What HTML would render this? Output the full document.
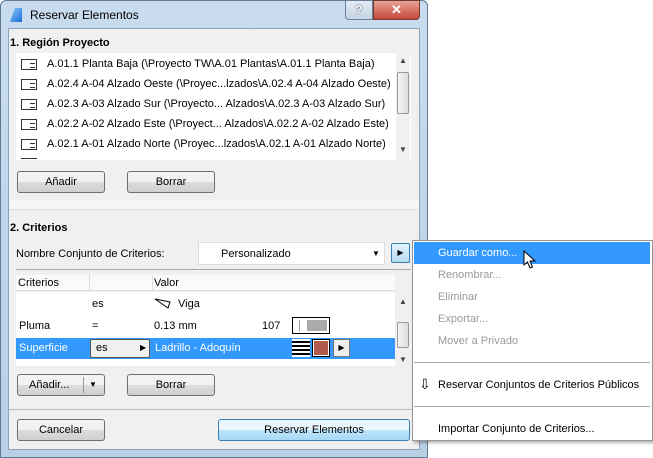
<!DOCTYPE html>
<html><head><meta charset="utf-8"><style>
*{box-sizing:border-box;margin:0;padding:0}
body{width:653px;height:458px;background:#fff;position:relative;overflow:hidden;font-family:"Liberation Sans",sans-serif;font-size:11px;color:#000}
.a{position:absolute}
.win{left:0;top:0;width:428px;height:458px;background:linear-gradient(#c9dcef,#b9cfe6);border:1px solid #5f7a99;border-radius:6px 6px 0 0}
.client{left:8px;top:28px;width:412px;height:422px;background:#f0f0f0;border:1px solid #8ea3bb}
.btn{position:absolute;height:22px;border:1px solid #707070;border-radius:3px;background:linear-gradient(#f2f2f2 50%,#dddddd 50%,#cfcfcf);text-align:center;line-height:20px}
.t{position:absolute;white-space:nowrap}
.row{position:absolute;left:47px;white-space:nowrap}
.ic{position:absolute;left:21px;width:16px;height:11px;border:1px solid #333;background:#fff}
.ic:after{content:"";position:absolute;right:1px;bottom:1px;width:5px;height:3px;border-top:1px solid #333;border-bottom:1px solid #333}
.sb{position:absolute;width:14px;background:#f0f0f0}
.m{position:absolute;left:438px;white-space:nowrap}
.g{color:#9a9a9a}
</style></head><body>
<div class="a win"></div>
<div class="a" style="left:10px;top:8px;width:12px;height:14px;background:linear-gradient(135deg,#8cc8ff,#1a6fd4);clip-path:polygon(40% 0,100% 0,100% 100%,0 100%)"></div>
<div class="t" style="left:30px;top:8px;font-size:12px">Reservar Elementos</div>
<div class="a" style="left:345px;top:0;width:28px;height:20px;border:1px solid #6d7f95;border-radius:0 0 0 4px;background:linear-gradient(#e3ebf4,#c5d4e4);text-align:center;font-weight:bold;color:#fff;text-shadow:0 0 2px #333;line-height:18px">?</div>
<div class="a" style="left:373px;top:0;width:47px;height:20px;border:1px solid #6d3a32;border-radius:0 0 4px 0;background:linear-gradient(#e8a397,#c6473a);text-align:center;font-weight:bold;color:#fff;line-height:18px;font-size:13px">✕</div>
<div class="a client"></div>
<div class="t" style="left:10px;top:37px;font-weight:bold">1. Región Proyecto</div>
<div class="a" style="left:16px;top:53px;width:395px;height:107px;background:#fff;overflow:hidden">
</div>
<div class="ic" style="top:59px"></div><div class="row" style="top:58px">A.01.1 Planta Baja (\Proyecto TW\A.01 Plantas\A.01.1 Planta Baja)</div>
<div class="ic" style="top:79px"></div><div class="row" style="top:78px">A.02.4 A-04 Alzado Oeste (\Proyec...lzados\A.02.4 A-04 Alzado Oeste)</div>
<div class="ic" style="top:99px"></div><div class="row" style="top:98px">A.02.3 A-03 Alzado Sur (\Proyecto... Alzados\A.02.3 A-03 Alzado Sur)</div>
<div class="ic" style="top:119px"></div><div class="row" style="top:118px">A.02.2 A-02 Alzado Este (\Proyect... Alzados\A.02.2 A-02 Alzado Este)</div>
<div class="ic" style="top:139px"></div><div class="row" style="top:138px">A.02.1 A-01 Alzado Norte (\Proyec...lzados\A.02.1 A-01 Alzado Norte)</div>
<div class="a" style="left:21px;top:158px;width:16px;height:2px;border-top:1px solid #333"></div>
<div class="sb" style="left:396px;top:53px;height:107px"></div>
<div class="a" style="left:397px;top:72px;width:12px;height:42px;border:1px solid #999;border-radius:2px;background:linear-gradient(90deg,#f4f4f4,#dcdcdc)"></div>
<div class="t" style="left:399px;top:56px;font-size:8px;color:#444">▲</div>
<div class="t" style="left:399px;top:145px;font-size:8px;color:#444">▼</div>
<div class="btn" style="left:17px;top:171px;width:88px">Añadir</div>
<div class="btn" style="left:127px;top:171px;width:88px">Borrar</div>
<div class="a" style="left:9px;top:200px;width:410px;height:10px;background:#f6f6f6;border-bottom:1px solid #ddd"></div>
<div class="t" style="left:10px;top:222px;font-weight:bold">2. Criterios</div>
<div class="t" style="left:16px;top:248px">Nombre Conjunto de Criterios:</div>
<div class="a" style="left:198px;top:242px;width:187px;height:23px;background:#fff;border:1px solid #ddd"></div>
<div class="t" style="left:221px;top:248px">Personalizado</div>
<div class="t" style="left:372px;top:249px;font-size:8px">▼</div>
<div class="a" style="left:391px;top:243px;width:19px;height:20px;border:1px solid #3c7fb1;border-radius:2px;background:linear-gradient(#e5f4fc,#b3dcf2);font-size:8px;text-align:center;line-height:18px">▶</div>
<div class="a" style="left:16px;top:269px;width:395px;height:1px;background:#aaa"></div>
<div class="a" style="left:16px;top:275px;width:379px;height:16px;background:#fafafa;border-bottom:1px solid #ddd"></div>
<div class="a" style="left:89px;top:275px;width:1px;height:16px;background:#ddd"></div>
<div class="a" style="left:152px;top:275px;width:1px;height:16px;background:#ddd"></div>
<div class="t" style="left:18px;top:277px">Criterios</div>
<div class="t" style="left:154px;top:277px">Valor</div>
<div class="a" style="left:16px;top:292px;width:379px;height:74px;background:#fff"></div>
<div class="t" style="left:92px;top:298px">es</div>
<svg class="a" style="left:154px;top:297px" width="18" height="12"><path d="M1 2 L16 5 L14 11 Z" fill="none" stroke="#000"/></svg>
<div class="t" style="left:178px;top:298px">Viga</div>
<div class="t" style="left:19px;top:320px">Pluma</div>
<div class="t" style="left:92px;top:320px">=</div>
<div class="t" style="left:154px;top:320px">0.13 mm</div>
<div class="t" style="left:262px;top:320px">107</div>
<div class="a" style="left:292px;top:317px;width:38px;height:17px;border:1px solid #000;background:#fff"></div>
<div class="a" style="left:299px;top:320px;width:1px;height:11px;background:#999"></div>
<div class="a" style="left:307px;top:320px;width:20px;height:11px;background:#aaa"></div>
<div class="a" style="left:16px;top:338px;width:379px;height:21px;background:#3399ff"></div>
<div class="t" style="left:19px;top:342px;color:#fff">Superficie</div>
<div class="a" style="left:90px;top:339px;width:60px;height:19px;border:1px solid #555;background:#f0f0f0;border-radius:2px"></div>
<div class="t" style="left:96px;top:342px">es</div>
<div class="t" style="left:140px;top:343px;font-size:8px">▶</div>
<div class="t" style="left:155px;top:342px;color:#fff">Ladrillo - Adoquín</div>
<div class="a" style="left:292px;top:339px;width:18px;height:18px;background:repeating-linear-gradient(#fff 0 2px,#000 2px 4px)"></div>
<div class="a" style="left:312px;top:339px;width:18px;height:18px;border:1px solid #000;background:#b05a4c;outline:1px solid #fff;outline-offset:-2px"></div>
<div class="a" style="left:333px;top:339px;width:17px;height:18px;border:1px solid #777;background:#eee;font-size:8px;text-align:center;line-height:16px">▶</div>
<div class="sb" style="left:396px;top:292px;height:74px"></div>
<div class="a" style="left:397px;top:322px;width:12px;height:26px;border:1px solid #999;border-radius:2px;background:linear-gradient(90deg,#f4f4f4,#dcdcdc)"></div>
<div class="t" style="left:399px;top:297px;font-size:8px;color:#444">▲</div>
<div class="t" style="left:399px;top:355px;font-size:8px;color:#444">▼</div>
<div class="btn" style="left:17px;top:374px;width:88px;text-align:left;padding-left:11px">Añadir...<span style="position:absolute;left:65px;top:2px;width:1px;height:16px;background:#999"></span><span style="position:absolute;left:71px;font-size:8px">▼</span></div>
<div class="btn" style="left:127px;top:374px;width:88px">Borrar</div>
<div class="a" style="left:9px;top:409px;width:410px;height:1px;background:#bbb"></div>
<div class="btn" style="left:17px;top:419px;width:88px">Cancelar</div>
<div class="btn" style="left:218px;top:419px;width:192px;border-color:#3c7fb1;background:linear-gradient(#eaf6fd 50%,#bee6fd 50%,#a7d9f5)">Reservar Elementos</div>
<div class="a" style="left:412px;top:240px;width:241px;height:201px;background:#fff;border:1px solid #979797;box-shadow:2px 2px 3px rgba(0,0,0,.3)"></div>
<div class="a" style="left:414px;top:242px;width:236px;height:22px;background:#3399ff"></div>
<div class="m" style="top:247px;color:#fff">Guardar como...</div>
<div class="m g" style="top:269px">Renombrar...</div>
<div class="m g" style="top:291px">Eliminar</div>
<div class="m g" style="top:313px">Exportar...</div>
<div class="m g" style="top:335px">Mover a Privado</div>
<div class="a" style="left:414px;top:362px;width:236px;height:1px;background:#aaa"></div>
<div class="t" style="left:419px;top:376px;font-size:14px">⇩</div>
<div class="m" style="top:379px">Reservar Conjuntos de Criterios Públicos</div>
<div class="a" style="left:414px;top:406px;width:236px;height:1px;background:#aaa"></div>
<div class="m" style="top:423px">Importar Conjunto de Criterios...</div>
<svg class="a" style="left:523px;top:250px" width="14" height="20"><path d="M1 1 L1 15 L4.5 12 L7 18 L9.5 17 L7 11 L12 11 Z" fill="#fff" stroke="#000"/></svg>
</body></html>
